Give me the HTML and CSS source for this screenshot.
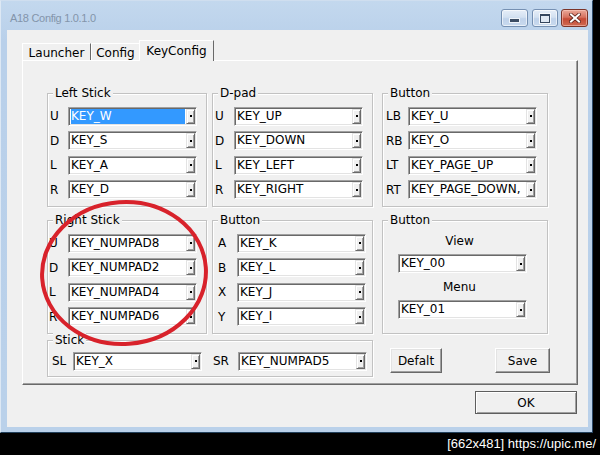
FILE: index.html
```html
<!DOCTYPE html>
<html>
<head>
<meta charset="utf-8">
<title>A18 Config 1.0.1.0</title>
<link rel="stylesheet" href="styles.css">
</head>
<body>
<div class="screen">
  <div class="window">
    <div class="titlebar">
      <span class="title">A18 Config 1.0.1.0</span>
      <div class="caption">
        <span class="cap cap-min"><i class="glyph-min"></i></span>
        <span class="cap cap-max"><i class="glyph-max"></i></span>
        <span class="cap cap-close">
          <svg width="12" height="10" viewBox="0 0 12 10">
            <path d="M2 1.5 L10 8.5 M10 1.5 L2 8.5" stroke="#5a2018" stroke-width="3.6" stroke-linecap="square"/>
            <path d="M2 1.5 L10 8.5 M10 1.5 L2 8.5" stroke="#fff" stroke-width="2" stroke-linecap="square"/>
          </svg>
        </span>
      </div>
    </div>
    <div class="client">
      <div class="tabs">
        <div class="tab tab-launcher">Launcher</div>
        <div class="tab tab-config">Config</div>
        <div class="tab tab-active">KeyConfig</div>
      </div>
      <div class="panel">
        <div class="layout">
          <section class="group g-left">
            <div class="group-title">Left Stick</div>
            <div class="rows">
              <div class="row"><span class="lbl">U</span><div class="combo"><span class="val sel">KEY_W</span><span class="drop"></span></div></div>
              <div class="row"><span class="lbl">D</span><div class="combo"><span class="val">KEY_S</span><span class="drop"></span></div></div>
              <div class="row"><span class="lbl">L</span><div class="combo"><span class="val">KEY_A</span><span class="drop"></span></div></div>
              <div class="row"><span class="lbl">R</span><div class="combo"><span class="val">KEY_D</span><span class="drop"></span></div></div>
            </div>
          </section>
          <section class="group g-dpad">
            <div class="group-title">D-pad</div>
            <div class="rows">
              <div class="row"><span class="lbl">U</span><div class="combo"><span class="val">KEY_UP</span><span class="drop"></span></div></div>
              <div class="row"><span class="lbl">D</span><div class="combo"><span class="val">KEY_DOWN</span><span class="drop"></span></div></div>
              <div class="row"><span class="lbl">L</span><div class="combo"><span class="val">KEY_LEFT</span><span class="drop"></span></div></div>
              <div class="row"><span class="lbl">R</span><div class="combo"><span class="val">KEY_RIGHT</span><span class="drop"></span></div></div>
            </div>
          </section>
          <section class="group g-btn1">
            <div class="group-title">Button</div>
            <div class="rows">
              <div class="row"><span class="lbl">LB</span><div class="combo"><span class="val">KEY_U</span><span class="drop"></span></div></div>
              <div class="row"><span class="lbl">RB</span><div class="combo"><span class="val">KEY_O</span><span class="drop"></span></div></div>
              <div class="row"><span class="lbl">LT</span><div class="combo"><span class="val">KEY_PAGE_UP</span><span class="drop"></span></div></div>
              <div class="row"><span class="lbl">RT</span><div class="combo"><span class="val">KEY_PAGE_DOWN,</span><span class="drop"></span></div></div>
            </div>
          </section>

          <section class="group g-right">
            <div class="group-title">Right Stick</div>
            <div class="rows">
              <div class="row"><span class="lbl">U</span><div class="combo"><span class="val">KEY_NUMPAD8</span><span class="drop"></span></div></div>
              <div class="row"><span class="lbl">D</span><div class="combo"><span class="val">KEY_NUMPAD2</span><span class="drop"></span></div></div>
              <div class="row"><span class="lbl">L</span><div class="combo"><span class="val">KEY_NUMPAD4</span><span class="drop"></span></div></div>
              <div class="row"><span class="lbl">R</span><div class="combo"><span class="val">KEY_NUMPAD6</span><span class="drop"></span></div></div>
            </div>
          </section>
          <section class="group g-btn2">
            <div class="group-title">Button</div>
            <div class="rows">
              <div class="row"><span class="lbl">A</span><div class="combo"><span class="val">KEY_K</span><span class="drop"></span></div></div>
              <div class="row"><span class="lbl">B</span><div class="combo"><span class="val">KEY_L</span><span class="drop"></span></div></div>
              <div class="row"><span class="lbl">X</span><div class="combo"><span class="val">KEY_J</span><span class="drop"></span></div></div>
              <div class="row"><span class="lbl">Y</span><div class="combo"><span class="val">KEY_I</span><span class="drop"></span></div></div>
            </div>
          </section>
          <section class="group g-view">
            <div class="group-title">Button</div>
            <div class="vbox">
              <div class="vlabel">View</div>
              <div class="combo"><span class="val">KEY_00</span><span class="drop"></span></div>
              <div class="vlabel vlabel-2">Menu</div>
              <div class="combo"><span class="val">KEY_01</span><span class="drop"></span></div>
            </div>
          </section>

          <section class="group g-stick">
            <div class="group-title">Stick</div>
            <div class="rows">
              <div class="row">
                <span class="lbl lbl-sl">SL</span><div class="combo"><span class="val">KEY_X</span><span class="drop"></span></div>
                <span class="lbl lbl-sr">SR</span><div class="combo"><span class="val">KEY_NUMPAD5</span><span class="drop"></span></div>
              </div>
            </div>
          </section>
          <div class="actions">
            <button class="btn btn-default">Defalt</button>
            <button class="btn btn-save">Save</button>
          </div>
        </div>
      </div>
      <div class="footer">
        <button class="btn btn-ok">OK</button>
      </div>
    </div>
  </div>
  <div class="stamp">[662x481] https://upic.me/</div>
  <svg class="annot" width="600" height="455" viewBox="0 0 600 455">
    <ellipse cx="124" cy="273" rx="82" ry="71" transform="rotate(-4 124 273)" fill="none" stroke="#d8222b" stroke-width="4"/>
  </svg>
</div>
</body>
</html>
```

FILE: styles.css
```css
* { box-sizing: border-box; }

html, body { margin: 0; padding: 0; }

body {
  background: #000;
  width: 600px;
  height: 455px;
  overflow: hidden;
  font-family: "DejaVu Sans", sans-serif;
  font-size: 12px;
  color: #000;
}

.screen {
  position: relative;
  width: 600px;
  height: 455px;
}

/* ---------- window frame ---------- */
.window {
  width: 593px;
  height: 433px;
  display: flex;
  flex-direction: column;
  background: linear-gradient(#c3d8ee, #b9d0ea 40px, #bad1ea);
  border-left: 1px solid #dde8f4;
  border-top: 1px solid #cfdeef;
  border-right: 1px solid #2d4a69;
  border-bottom: 1px solid #22405b;
  padding: 0 4px 5px 6px;
}

.titlebar {
  height: 29px;
  display: flex;
  align-items: flex-start;
  flex: none;
}

.title {
  margin: 10px 0 0 3px;
  font-family: "Liberation Sans", sans-serif;
  font-size: 11px;
  letter-spacing: -0.3px;
  line-height: 14px;
  color: #8394aa;
}

.caption {
  margin: 8px 0 0 auto;
  display: flex;
}

.cap {
  height: 18px;
  border: 1px solid #7590b2;
  border-radius: 3px;
  display: flex;
  align-items: center;
  justify-content: center;
  background: linear-gradient(#e6eef8, #d3e1f1 45%, #bfd2ea 55%, #c9daee);
  box-shadow: inset 0 0 0 1px rgba(255,255,255,0.6);
}

.cap-min { width: 27px; }
.cap-max { width: 26px; margin-left: 4px; }
.cap-close {
  width: 27px;
  margin-left: 3px;
  border-color: #7b3428;
  background: linear-gradient(#eaa999, #d7725f 45%, #c54a35 55%, #cf6a52);
  box-shadow: inset 0 0 0 1px rgba(255,210,200,0.5);
}

.glyph-min {
  display: block;
  width: 11px;
  height: 5px;
  margin-top: 5px;
  background: #3c4d64;
  border: 1px solid #eef3f9;
}

.glyph-max {
  display: block;
  width: 10px;
  height: 9px;
  border: 1px solid #34465e;
  border-top-width: 2px;
  background: #dfe8f3;
  box-shadow: 0 0 0 1px #f4f7fb;
}

/* ---------- client ---------- */
.client {
  height: 397px;
  background: #f0f0f0;
  padding: 10px 10px 0 15px;
  display: flex;
  flex-direction: column;
}

.tabs {
  height: 20px;
  display: flex;
  align-items: flex-end;
  position: relative;
  z-index: 1;
  flex: none;
}

.tab {
  height: 17px;
  border-top: 1px solid #fff;
  border-left: 1px solid #fff;
  padding-top: 2px;
  line-height: 14px;
  text-align: center;
  background: #f0f0f0;
}

.tab-launcher { width: 69px; border-right: 1px solid #696969; }
.tab-config { width: 48px; }
.tab-active {
  width: 75px;
  height: 21px;
  margin-bottom: -1px;
  padding-top: 3px;
  border-right: 1px solid #696969;
}

.panel {
  height: 325px;
  flex: none;
  border: 1px solid;
  border-color: #fff #696969 #696969 #fff;
  box-shadow: inset -1px -1px 0 #a0a0a0;
  padding: 32px 0 0 24px;
}

.layout {
  display: grid;
  grid-template-columns: 160px 165px 168px;
  grid-template-rows: 121px 114px 37px;
  column-gap: 5px;
  row-gap: 6px;
  align-items: start;
}

/* ---------- group boxes ---------- */
.group {
  height: 114px;
  border: 1px solid #c2c2c2;
  box-shadow: inset 1px 1px 0 #fff, 1px 1px 0 #fff;
  display: flex;
  flex-direction: column;
  align-items: flex-start;
}

.group-title {
  margin: -8px 0 0 5px;
  padding: 0 2px;
  line-height: 14px;
  background: #f0f0f0;
}

.g-left, .g-right { width: 160px; }
.g-dpad, .g-btn2 { width: 161px; }
.g-btn1, .g-view { width: 166px; }

.rows {
  align-self: stretch;
  margin-top: 6.5px;
  display: flex;
  flex-direction: column;
  gap: 5.5px;
}

.row {
  display: flex;
  align-items: center;
  height: 19px;
}

.lbl {
  flex: none;
  width: 20px;
  padding-left: 2px;
  line-height: 14px;
}

.g-dpad .lbl { width: 21px; }
.g-btn1 .lbl { width: 25px; padding-left: 3px; }
.g-right .lbl { padding-left: 1px; }
.g-btn2 .lbl { width: 24px; padding-left: 5px; }

.g-stick {
  grid-column: 1 / span 2;
  width: 326px;
  height: 37px;
}
.g-stick .rows { margin-top: 4.5px; }
.lbl.lbl-sl { width: 25px; padding-left: 4px; }
.lbl.lbl-sr { width: 36px; padding-left: 11px; }

.vbox {
  margin: 7px 0 0 15px;
  width: 129px;
  display: flex;
  flex-direction: column;
}
.vlabel {
  line-height: 14px;
  text-align: center;
  padding-right: 6px;
  margin-bottom: 6px;
}
.vlabel-2 { margin-top: 7px; }

/* ---------- combo boxes ---------- */
.combo {
  width: 129px;
  height: 19px;
  flex: none;
  display: flex;
  background: #fff;
  border: 1px solid;
  border-color: #a0a0a0 #fff #fff #a0a0a0;
  box-shadow: inset 1px 1px 0 #696969, inset -1px -1px 0 #e3e3e3;
  padding: 1px;
}

.val {
  flex: 1;
  min-width: 0;
  overflow: hidden;
  white-space: nowrap;
  padding-left: 1px;
  line-height: 15px;
}

.val.sel {
  background: #3399ff;
  color: #fff;
  margin: 0 1px;
  padding-left: 0;
}

.drop {
  flex: none;
  width: 9px;
  border: 1px solid;
  border-color: #e3e3e3 #696969 #696969 #e3e3e3;
  box-shadow: inset 1px 1px 0 #fff, inset -1px -1px 0 #a0a0a0;
  background: #f0f0f0;
  display: flex;
  align-items: center;
  justify-content: center;
}
.drop::after {
  content: "";
  width: 2px;
  height: 2px;
  background: #000;
}

/* ---------- push buttons ---------- */
.btn {
  appearance: none;
  font: inherit;
  color: #000;
  background: #f0f0f0;
  border: 1px solid;
  border-color: #fff #696969 #696969 #fff;
  box-shadow: inset -1px -1px 0 #a0a0a0, inset 1px 1px 0 #e3e3e3;
  padding: 0;
  margin: 0;
  height: 25px;
  line-height: 14px;
  display: flex;
  align-items: center;
  justify-content: center;
}

.actions {
  width: 168px;
  margin-top: 8px;
  padding-left: 8px;
  display: flex;
  justify-content: space-between;
}
.btn-default { width: 52px; }
.btn-save { width: 55px; }

.footer {
  display: flex;
  justify-content: flex-end;
  padding: 6px 1px 0 0;
}
.btn-ok {
  width: 102px;
  height: 23px;
  border-color: #5e5e5e;
  box-shadow: inset 1px 1px 0 #fff, inset -1px -1px 0 #a0a0a0;
}

/* ---------- screenshot extras ---------- */
.stamp {
  height: 22px;
  padding: 3px 4px 0 0;
  text-align: right;
  font-family: "Liberation Sans", sans-serif;
  font-size: 13px;
  line-height: 16px;
  color: #fff;
}

.annot {
  position: absolute;
  left: 0;
  top: 0;
  pointer-events: none;
}
```
